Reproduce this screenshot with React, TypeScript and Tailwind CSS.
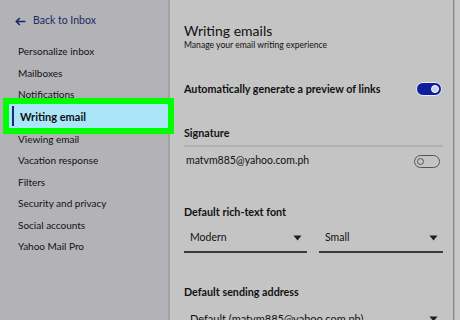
import React from 'react';

const menu = [
  'Personalize inbox',
  'Mailboxes',
  'Notifications',
  'Writing email',
  'Viewing email',
  'Vacation response',
  'Filters',
  'Security and privacy',
  'Social accounts',
  'Yahoo Mail Pro',
];

function Caret() {
  return (
    <svg width="9" height="6" viewBox="0 0 9 6" className="shrink-0">
      <path d="M0.5 0.5 L8.5 0.5 L4.5 5.5 Z" fill="#1f1f1f" />
    </svg>
  );
}

function Toggle({ on }: { on: boolean }) {
  if (on) {
    return (
      <div className="w-[26px] h-[14px] rounded-full bg-[#0f1f9c] border border-[#e8f0ff] flex items-center justify-end pr-[2px]">
        <div className="w-[8px] h-[8px] rounded-full bg-[#c8d0f0] border border-white" />
      </div>
    );
  }
  return (
    <div className="w-[26px] h-[13px] rounded-full border border-[#555] flex items-center pl-[2px]">
      <div className="w-[7px] h-[7px] rounded-full border border-[#555]" />
    </div>
  );
}

function Select({ label, className }: { label: string; className: string }) {
  return (
    <div className={`flex items-center justify-between pl-[6px] pr-[5px] h-[28px] border-b-2 border-[#3a3a3a] ${className}`}>
      <span>{label}</span>
      <Caret />
    </div>
  );
}

export default function App() {
  return (
    <div
      className="w-[460px] h-[320px] overflow-hidden flex text-[#111] bg-[#c4c4c4]"
      style={{ fontFamily: 'Lato, "Open Sans", sans-serif' }}
    >
      {/* Sidebar */}
      <div className="relative w-[170px] shrink-0 bg-[#b3b3b7] border-r-2 border-[#a2a2a4] text-[10px]">
        <div className="flex items-center gap-[7px] pl-[15px] pt-[13px] h-[29px] text-[#1b2a66]">
          <svg width="11" height="9" viewBox="0 0 11 9">
            <path d="M10.5 4.5 H1.5 M4.8 1 L1.3 4.5 L4.8 8" stroke="#1b2a66" strokeWidth="1.6" fill="none" />
          </svg>
          <span className="text-[10.5px]">Back to Inbox</span>
        </div>
        <div className="mt-[12px] flex flex-col">
          {menu.map((m) =>
            m === 'Writing email' ? (
              <div key={m} className="relative h-[23px] flex items-center pl-[20px] font-bold text-[11px]">
                <div className="absolute left-[3px] -top-[8px] w-[171px] h-[36px] border-[6px] border-[#00ff00] bg-[#aae6f8]">
                  <div className="absolute left-[3px] top-[2px] w-[2px] h-[20px] bg-[#1b2a80]" />
                </div>
                <span className="relative">{m}</span>
              </div>
            ) : (
              <div key={m} className="h-[21.5px] flex items-center pl-[18px]">
                {m}
              </div>
            )
          )}
        </div>
      </div>

      {/* Content */}
      <div className="w-[284px] shrink-0 pl-[14px] pr-[10px] text-[10.5px] border-r border-[#8a8a8a]">
        <div className="pt-[21px]">
          <div className="text-[14px] leading-[19px]">Writing emails</div>
          <div className="text-[8.6px] leading-[11px]">Manage your email writing experience</div>
        </div>

        <div className="mt-[30px] flex items-center justify-between pr-[1px] h-[16px]">
          <span className="font-bold text-[10.75px]">Automatically generate a preview of links</span>
          <Toggle on />
        </div>

        <div className="mt-[28px] font-bold text-[10.75px] h-[16px] flex items-center">Signature</div>
        <div className="mt-[4px] border-t-2 border-[#b0b0b0]" />
        <div className="mt-[5px] flex items-center justify-between pr-[3px] h-[18px]">
          <span className="pl-[2px] text-[10.5px]">matvm885@yahoo.com.ph</span>
          <Toggle on={false} />
        </div>

        <div className="mt-[34px] font-bold text-[10.75px] h-[16px] flex items-center">Default rich-text font</div>
        <div className="mt-[5px] flex gap-[12px]">
          <Select label="Modern" className="w-[123px]" />
          <Select label="Small" className="w-[124px]" />
        </div>

        <div className="mt-[31px] font-bold text-[10.75px] h-[16px] flex items-center">Default sending address</div>
        <div className="mt-[10px] flex items-center justify-between pl-[6px] pr-[5px] h-[18px] text-[11px]">
          <span>Default (matvm885@yahoo.com.ph)</span>
          <Caret />
        </div>
      </div>
      <div className="flex-1 bg-[#c8c8c8] border-l border-[#b0b0b0]" />
    </div>
  );
}
